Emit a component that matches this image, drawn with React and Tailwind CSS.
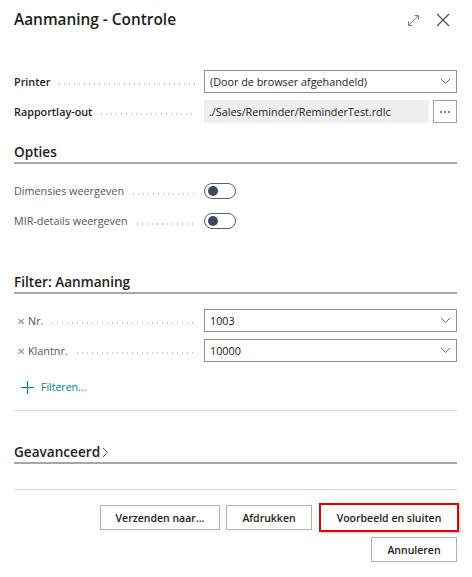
import React from 'react';

const font = { fontFamily: '"Open Sans", "Noto Sans", sans-serif' };

function Chevron() {
  return (
    <svg width="11" height="7" viewBox="0 0 11 7" className="shrink-0">
      <path d="M1 1 L5.5 5.5 L10 1" fill="none" stroke="#707070" strokeWidth="1" />
    </svg>
  );
}

function Dots() {
  return (
    <span className="flex-1 ml-[7px] mr-[8px] h-[2px] mt-[5px] bg-[radial-gradient(circle,#c9c9c9_0.8px,transparent_1px)] bg-[length:5px_2px]" />
  );
}

function Label({ children, bold, x }) {
  return (
    <div className="w-[190px] flex items-center">
      {x && <span className="text-[#8a8a8a] text-[10px] ml-[3px] mr-[3px] leading-none">✕</span>}
      <span className={bold ? 'font-semibold text-[#212121]' : 'text-[#555]'}>{children}</span>
      <Dots />
    </div>
  );
}

function Select({ value }) {
  return (
    <div className="flex-1 h-[23px] border border-[#8f8f8f] flex items-center justify-between pl-[5px] pr-[5px] text-[#212121]">
      <span>{value}</span>
      <Chevron />
    </div>
  );
}

function Toggle() {
  return (
    <div className="w-[32px] h-[16px] rounded-full border border-[#605e5c] flex items-center pl-[3px]">
      <div className="w-[10px] h-[10px] rounded-full bg-[#3f4a5c]" />
    </div>
  );
}

function SectionHeader({ children, className = '' }) {
  return (
    <div className={`h-[22px] border-b-2 border-[#a6a6a6] text-[13.6px] font-semibold text-[#212121] leading-[20px] flex items-center ${className}`}>
      {children}
    </div>
  );
}

function Btn({ children, className = '' }) {
  return (
    <button className={`h-[25px] border border-[#b0b0b0] bg-white text-[10.5px] font-semibold text-[#212121] ${className}`}>
      {children}
    </button>
  );
}

export default function App() {
  return (
    <div className="w-[472px] h-[577px] bg-white text-[10.8px] leading-[16px] pl-[14px] pr-[15px] overflow-hidden" style={font}>
      {/* title */}
      <div className="flex items-center justify-between h-[40px]">
        <h1 className="text-[15.4px] leading-[20px] font-semibold text-[#212121]">Aanmaning - Controle</h1>
        <div className="flex items-center gap-[16px] mr-[7px]">
          <svg width="13" height="13" viewBox="0 0 13 13">
            <path d="M1.5 11.5 L11.5 1.5 M1.5 11.5 L1.5 7.5 M1.5 11.5 L5.5 11.5 M11.5 1.5 L7.5 1.5 M11.5 1.5 L11.5 5.5" fill="none" stroke="#808080" strokeWidth="1" />
          </svg>
          <svg width="14" height="14" viewBox="0 0 14 14">
            <path d="M1 1 L13 13 M13 1 L1 13" fill="none" stroke="#555" strokeWidth="1.3" />
          </svg>
        </div>
      </div>

      {/* printer */}
      <div className="mt-[30px] flex flex-col gap-[7px]">
        <div className="flex items-center">
          <Label bold>Printer</Label>
          <Select value="(Door de browser afgehandeld)" />
        </div>
        <div className="flex items-center">
          <Label bold>Rapportlay-out</Label>
          <div className="flex-1 h-[23px] bg-[#efefef] flex items-center pl-[5px] text-[#212121]">
            ./Sales/Reminder/ReminderTest.rdlc
          </div>
          <div className="ml-[4px] w-[24px] h-[23px] border border-[#a0a0a0] flex items-center justify-center gap-[2px]">
            <span className="w-[2px] h-[2px] rounded-full bg-[#555]" />
            <span className="w-[2px] h-[2px] rounded-full bg-[#555]" />
            <span className="w-[2px] h-[2px] rounded-full bg-[#555]" />
          </div>
        </div>
      </div>

      {/* opties */}
      <SectionHeader className="mt-[19px]">Opties</SectionHeader>
      <div className="mt-[19px] flex flex-col gap-[14px]">
        <div className="flex items-center h-[16px]">
          <Label>Dimensies weergeven</Label>
          <Toggle />
        </div>
        <div className="flex items-center h-[16px]">
          <Label>MIR-details weergeven</Label>
          <Toggle />
        </div>
      </div>

      {/* filter */}
      <SectionHeader className="mt-[43px]">Filter: Aanmaning</SectionHeader>
      <div className="mt-[15px] flex flex-col gap-[7px]">
        <div className="flex items-center">
          <Label x>Nr.</Label>
          <Select value="1003" />
        </div>
        <div className="flex items-center">
          <Label x>Klantnr.</Label>
          <Select value="10000" />
        </div>
      </div>
      <div className="mt-[17px] h-[16px] flex items-center pl-[7px] text-[#00838a] text-[10.5px]">
        <svg width="13" height="13" viewBox="0 0 13 13" className="mr-[7px]">
          <path d="M6.5 0 V13 M0 6.5 H13" fill="none" stroke="#00838a" strokeWidth="1.2" />
        </svg>
        Filteren...
      </div>

      <div className="mt-[15px] border-b border-[#dcdcdc]" />

      {/* geavanceerd */}
      <SectionHeader className="mt-[31px]">
        Geavanceerd
        <svg width="7" height="11" viewBox="0 0 7 11" className="ml-[2px] mt-[1px]">
          <path d="M1 1 L5.5 5.5 L1 10" fill="none" stroke="#555" strokeWidth="1" />
        </svg>
      </SectionHeader>

      <div className="mt-[25px] border-b border-[#dcdcdc]" />

      {/* buttons */}
      <div className="mt-[13px] flex justify-end items-center">
        <Btn className="w-[120px] mr-[6px]">Verzenden naar...</Btn>
        <Btn className="w-[86px] mr-[7px]">Afdrukken</Btn>
        <div className="border-2 border-[#e00000] -mr-[2px] shadow-[1px_1px_2px_rgba(0,0,0,0.25)]">
          <Btn className="w-[136px] h-[24px] border-0 block">Voorbeeld en sluiten</Btn>
        </div>
      </div>
      <div className="mt-[5px] flex justify-end">
        <Btn className="w-[86px]">Annuleren</Btn>
      </div>
    </div>
  );
}
